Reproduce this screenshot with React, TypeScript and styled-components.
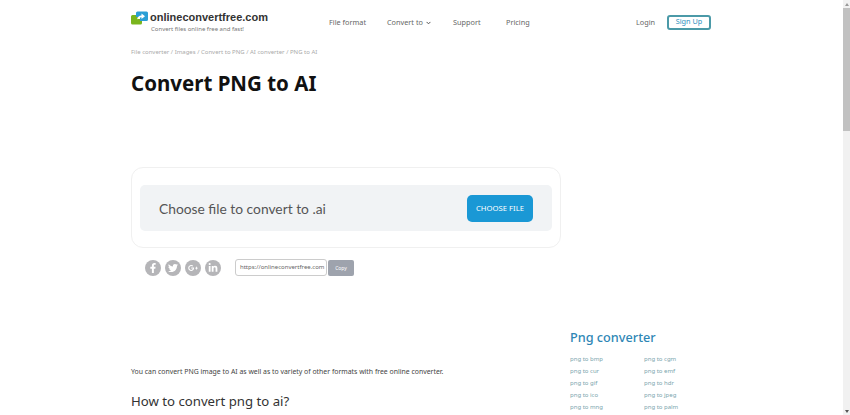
import React from 'react';
import styled, { createGlobalStyle } from 'styled-components';
import { FaFacebookF, FaTwitter, FaGooglePlusG, FaLinkedinIn } from 'react-icons/fa';

const GlobalStyle = createGlobalStyle`
    html, body {
        margin: 0;
        height: 415px;
        overflow: hidden;
        background: #fff;
        font-family: "Noto Sans", "Open Sans", sans-serif;
    }
`;

const Page = styled.div`
    display: flex;
    height: 415px;
`;

const Main = styled.div`
    flex: 1;
    padding-left: 131px;
    overflow: hidden;
`;

const Scrollbar = styled.div`
    width: 7px;
    background: #f1f1f1;
    display: flex;
    flex-direction: column;
    align-items: stretch;
    justify-content: space-between;
    position: relative;
`;

const ScrollArrow = styled.div<{ $down?: boolean }>`
    height: 8px;
    display: flex;
    align-items: center;
    justify-content: center;

    &:before {
        content: '';
        border-left: 2px solid transparent;
        border-right: 2px solid transparent;
        ${p => p.$down ? 'border-top: 3px solid #555;' : 'border-bottom: 3px solid #999;'}
    }
`;

const ScrollThumb = styled.div`
    position: absolute;
    top: 8px;
    left: 0;
    right: 0;
    height: 123px;
    background: #c1c1c1;
`;

const Header = styled.header`
    display: flex;
    align-items: flex-start;
    height: 44px;
    width: 580px;
`;

const Brand = styled.div`
    width: 198px;
    padding-top: 10px;
    display: flex;
    flex-direction: column;
`;

const BrandRow = styled.div`
    display: flex;
    align-items: center;
    gap: 2px;
`;

const BrandName = styled.span`
    font-family: "Liberation Sans", Arial, sans-serif;
    font-size: 11px;
    line-height: 15px;
    font-weight: 700;
    color: #333;
`;

const Tagline = styled.span`
    font-size: 6px;
    line-height: 10px;
    margin: -1px 0 0 20px;
    color: #777;
`;

const Nav = styled.nav`
    display: flex;
    align-items: center;
    gap: 22px;
    height: 44px;
    flex: 1;
`;

const NavLink = styled.a<{ $width: number }>`
    width: ${p => p.$width}px;
    font-size: 7.3px;
    color: #666;
    white-space: nowrap;
    display: flex;
    align-items: center;
    gap: 3px;
`;

const Chevron = styled.svg`
    width: 5px;
    height: 4px;
    margin-top: 2px;
    flex-shrink: 0;
`;

const Auth = styled.div`
    display: flex;
    align-items: center;
    gap: 13px;
    height: 44px;
`;

const SignUp = styled.button`
    width: 44px;
    height: 15px;
    padding: 0;
    background: #fff;
    border: 2px solid #4b9aa8;
    border-radius: 3px;
    color: #2f8fc0;
    font-family: inherit;
    font-size: 7.3px;
    line-height: 1;
`;

const Breadcrumb = styled.div`
    font-size: 6px;
    line-height: 10px;
    margin-top: 3px;
    color: #aaa;
`;

const Title = styled.h1`
    margin: 10px 0 0;
    font-size: 20.5px;
    line-height: 32px;
    font-weight: 700;
    color: #111;
`;

const Columns = styled.div`
    display: flex;
    gap: 9px;
`;

const Content = styled.div`
    width: 430px;
`;

const Card = styled.section`
    margin-top: 68px;
    height: 81px;
    box-sizing: border-box;
    border: 1px solid #f0f0f0;
    border-radius: 12px;
    padding: 17px 8px;
`;

const DropZone = styled.div`
    height: 46px;
    background: #f1f3f5;
    border-radius: 5px;
    display: flex;
    align-items: center;
    justify-content: space-between;
    padding: 0 19px 0 19px;
`;

const DropLabel = styled.span`
    font-family: Lato, "Noto Sans", sans-serif;
    font-size: 13.8px;
    color: #555;
`;

const ChooseButton = styled.button`
    width: 66px;
    height: 27px;
    padding: 0;
    border: none;
    border-radius: 5px;
    background: #1a98d5;
    color: #fff;
    font-family: inherit;
    font-size: 7.7px;
`;

const ShareRow = styled.div`
    display: flex;
    align-items: center;
    margin-top: 11px;
    padding-left: 14px;
`;

const SocialIcons = styled.div`
    display: flex;
    gap: 4px;
    width: 90px;
`;

const SocialIcon = styled.span`
    width: 16px;
    height: 16px;
    border-radius: 50%;
    background: #b5b5b8;
    color: #fff;
    font-size: 10px;
    display: flex;
    align-items: center;
    justify-content: center;
`;

const UrlBox = styled.div`
    width: 92px;
    height: 17px;
    box-sizing: border-box;
    border: 1px solid #ccc;
    border-radius: 3px;
    padding: 0 4px;
    font-size: 6px;
    line-height: 15px;
    color: #666;
    white-space: nowrap;
`;

const CopyButton = styled.button`
    margin-left: 1px;
    width: 26px;
    height: 16px;
    padding: 0;
    border: none;
    border-radius: 2px;
    background: #9ea3ad;
    color: #fff;
    font-family: inherit;
    font-size: 5px;
`;

const Intro = styled.p`
    margin: 90px 0 0;
    font-size: 6.9px;
    line-height: 12px;
    color: #444;
`;

const Subtitle = styled.h2`
    margin: 13px 0 0;
    font-size: 13.2px;
    line-height: 20px;
    font-weight: 400;
    color: #333;
`;

const Sidebar = styled.aside`
    margin-top: 228px;
`;

const SidebarTitle = styled.h3`
    margin: 0;
    font-size: 12.7px;
    line-height: 20px;
    font-weight: 500;
    color: #2e86b5;
`;

const LinkGrid = styled.div`
    display: grid;
    grid-template-columns: 74px 74px;
    grid-auto-rows: 12px;
    margin-top: 6px;
`;

const ConverterLink = styled.a`
    font-size: 6px;
    line-height: 12px;
    color: #7aa5ad;
`;

const converterLinks = [
    'png to bmp', 'png to cgm',
    'png to cur', 'png to emf',
    'png to gif', 'png to hdr',
    'png to ico', 'png to jpeg',
    'png to mng', 'png to palm',
];

const Logo = () => (
    <svg width="17" height="14" viewBox="0 0 17 14">
        <path d="M0 5.500 Q0 4 1.500 4 H7 V8 H11 V12 Q11 13.500 9.500 13.500 H1.500 Q0 13.500 0 12 Z" fill="#7ab51d" />
        <path d="M5 2 Q5 .5 6.500 .5 H15.500 Q17 .5 17 2 V8.500 Q17 10 15.500 10 H9 V6 H5 Z" fill="#2a9fd6" />
        <path d="M6 8.500 Q6.500 4.800 10.500 4.500 V2.500 L14 5.200 L10.500 8 V6.300 Q8 6.300 6 8.500 Z" fill="#fff" />
    </svg>
);

export default function App() {
    return (
        <Page>
            <GlobalStyle />
            <Main>
                <Header>
                    <Brand>
                        <BrandRow>
                            <Logo />
                            <BrandName>onlineconvertfree.com</BrandName>
                        </BrandRow>
                        <Tagline>Convert files online free and fast!</Tagline>
                    </Brand>
                    <Nav>
                        <NavLink $width={36}>File format</NavLink>
                        <NavLink $width={44}>
                            Convert to
                            <Chevron viewBox="0 0 6 4">
                                <path d="M.7.7 3 3l2.300-2.300" fill="none" stroke="#555" strokeWidth="1.200" />
                            </Chevron>
                        </NavLink>
                        <NavLink $width={31}>Support</NavLink>
                        <NavLink $width={108}>Pricing</NavLink>
                    </Nav>
                    <Auth>
                        <NavLink $width={18}>Login</NavLink>
                        <SignUp>Sign Up</SignUp>
                    </Auth>
                </Header>
                <Breadcrumb>File converter / Images / Convert to PNG / AI converter / PNG to AI</Breadcrumb>
                <Title>Convert PNG to AI</Title>
                <Columns>
                    <Content>
                        <Card>
                            <DropZone>
                                <DropLabel>Choose file to convert to .ai</DropLabel>
                                <ChooseButton>CHOOSE FILE</ChooseButton>
                            </DropZone>
                        </Card>
                        <ShareRow>
                            <SocialIcons>
                                <SocialIcon><FaFacebookF /></SocialIcon>
                                <SocialIcon><FaTwitter /></SocialIcon>
                                <SocialIcon><FaGooglePlusG /></SocialIcon>
                                <SocialIcon><FaLinkedinIn /></SocialIcon>
                            </SocialIcons>
                            <UrlBox>https://onlineconvertfree.com</UrlBox>
                            <CopyButton>Copy</CopyButton>
                        </ShareRow>
                        <Intro>You can convert PNG image to AI as well as to variety of other formats with free online converter.</Intro>
                        <Subtitle>How to convert png to ai?</Subtitle>
                    </Content>
                    <Sidebar>
                        <SidebarTitle>Png converter</SidebarTitle>
                        <LinkGrid>
                            {converterLinks.map(label => <ConverterLink key={label}>{label}</ConverterLink>)}
                        </LinkGrid>
                    </Sidebar>
                </Columns>
            </Main>
            <Scrollbar>
                <ScrollArrow />
                <ScrollThumb />
                <ScrollArrow $down />
            </Scrollbar>
        </Page>
    );
}
